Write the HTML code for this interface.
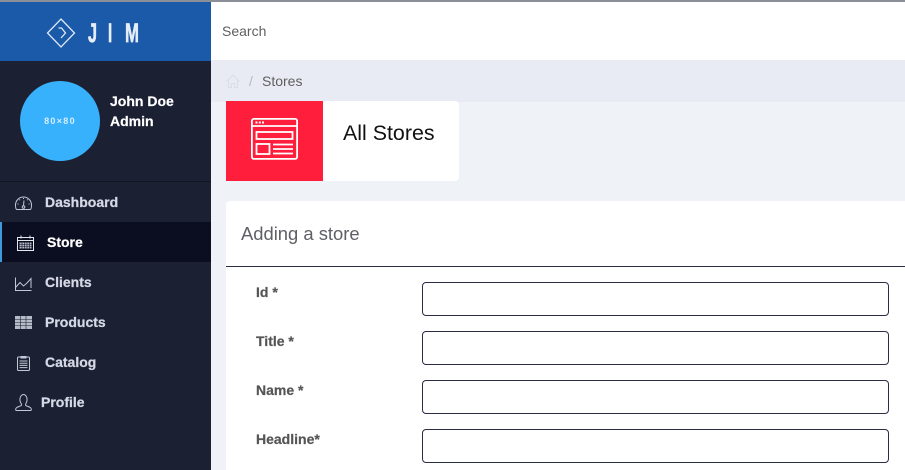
<!DOCTYPE html>
<html><head><meta charset="utf-8"><style>
*{box-sizing:border-box}
html,body{margin:0;padding:0;width:905px;height:470px;overflow:hidden;background:#eff2f6;font-family:"Liberation Sans",sans-serif}
#w{position:absolute;left:0;top:0;width:905px;height:470px;overflow:hidden;background:#eff2f6;filter:blur(.3px)}
.a{position:absolute}
.t{position:absolute;white-space:nowrap;line-height:20px}
.nav{font-weight:700;font-size:14px;color:#d5d9e6;-webkit-text-stroke:.25px currentColor}
.lab{font-weight:700;font-size:14px;color:#555;left:256px;-webkit-text-stroke:.2px currentColor}
.inp{position:absolute;left:422px;width:467px;height:34px;border:1px solid #2b2d45;border-radius:4px;background:#fff}
svg{position:absolute;overflow:visible}
.logo{position:absolute;top:20px;font-size:27px;line-height:27px;font-weight:700;color:#e6eef8;transform-origin:left center;white-space:nowrap;-webkit-text-stroke:.7px #e6eef8}
</style></head><body><div id="w">
<div class="a" style="left:0;top:0;width:905px;height:2px;background:#8a8f98;z-index:5"></div>
<div class="a" style="left:211px;top:1px;width:694px;height:59px;background:#fff"></div>
<div class="t" style="left:222px;top:21px;font-size:14px;color:#5f5f5f">Search</div>
<div class="a" style="left:211px;top:60px;width:694px;height:42px;background:#e8ebf3"></div>
<svg style="left:226px;top:74px" width="14" height="14" viewBox="0 0 14 14" fill="none" stroke="#d9dde6" stroke-width="1"><path d="M.5 7.500 7 1l6.500 6.500M2.500 6v7.500h3V9.500h3v4h3V6"/></svg>
<div class="t" style="left:249px;top:71px;font-size:14px;color:#b5b8bf">/</div>
<div class="t" style="left:262px;top:71px;font-size:14px;color:#5f5f5f">Stores</div>

<div class="a" style="left:0;top:0;width:211px;height:470px;background:#1c2033"></div>
<div class="a" style="left:0;top:1px;width:211px;height:60px;background:#1a5aa8"></div>
<svg style="left:47px;top:18px" width="28" height="30" viewBox="0 0 28 30" fill="none" stroke="#dfe9f6" stroke-width="1.300"><path d="M14 1 27.500 15 14 29 .5 15Z"/><path d="M11.500 10h3l4 5-4.500 5"/></svg>
<div class="logo" style="left:88px;transform:scaleX(.6)">J</div>
<div class="logo" style="left:107.500px;transform:scaleX(.55)">I</div>
<div class="logo" style="left:125px;transform:scaleX(.62)">M</div>

<div class="a" style="left:20px;top:81px;width:80px;height:80px;border-radius:50%;background:#38b1fd"></div>
<div class="t" style="left:20px;top:112px;width:80px;text-align:center;font-size:9px;line-height:18px;letter-spacing:1.300px;color:#d5eeff;font-weight:700">80×80</div>
<div class="t" style="left:110px;top:91px;font-size:14px;font-weight:700;color:#fff;-webkit-text-stroke:.2px #fff">John Doe</div>
<div class="t" style="left:110px;top:111px;font-size:14px;font-weight:700;color:#fff;-webkit-text-stroke:.2px #fff">Admin</div>

<div class="a" style="left:0;top:181px;width:211px;height:1px;background:#12141f"></div>
<div class="a" style="left:0;top:222px;width:211px;height:40px;background:#0a0e20"></div>
<div class="a" style="left:0;top:222px;width:2px;height:40px;background:#3d9bdc"></div>

<div class="t nav" style="left:45px;top:192px">Dashboard</div>
<div class="t nav" style="left:47px;top:232px;color:#fff">Store</div>
<div class="t nav" style="left:45px;top:272px">Clients</div>
<div class="t nav" style="left:45px;top:312px">Products</div>
<div class="t nav" style="left:45px;top:352px">Catalog</div>
<div class="t nav" style="left:41px;top:392px">Profile</div>

<svg style="left:15px;top:196px" width="17" height="14" viewBox="0 0 17 14" fill="none" stroke="#c3c8d6" stroke-width="1"><path d="M2 13.500h13c1 0 1.500-1.800 1.500-4.500A8 8 0 0 0 .5 9c0 2.700.5 4.500 1.500 4.500Z"/><path d="M8.500 9.500 9 4.500M8.500 2v1M4.300 3.500l.7.7M12.700 3.500l-.7.7M2.500 8h1M13.500 8h1"/><circle cx="8.500" cy="11" r="1.300"/></svg>
<svg style="left:17px;top:235px" width="17" height="16" viewBox="0 0 17 16" fill="none" stroke="#e4e7ef" stroke-width="1"><rect x=".5" y="2.500" width="16" height="13"/><path d="M.5 5.500h16M4 .5v3M13 .5v3"/><rect x="2.500" y="7.500" width="12" height="6" fill="#b4b8c6" stroke="none"/><path d="M2.500 9.500h12M2.500 11.500h12M5 7.500v6M7.500 7.500v6M10 7.500v6M12.500 7.500v6" stroke="#0a0e20" stroke-width=".6"/></svg>
<svg style="left:15px;top:277px" width="17" height="14" viewBox="0 0 17 14" fill="none" stroke="#c3c8d6" stroke-width="1"><path d="M.5 .5v13h16"/><path d="M.5 10.500 5 5.500l3.500 3.500 3-2.500 4.500-5V11"/></svg>
<svg style="left:15px;top:316px" width="17" height="13" viewBox="0 0 17 13"><rect width="17" height="13" fill="#b6bbc9"/><path d="M0 3.500h17M0 6.500h17M0 9.500h17M5.500 0v13M11 0v13" stroke="#1c2033" stroke-width=".6"/></svg>
<svg style="left:17px;top:355px" width="13" height="16" viewBox="0 0 13 16" fill="none" stroke="#c3c8d6" stroke-width="1"><rect x=".5" y="2" width="12" height="13.500" rx="1"/><path d="M4 3V1.500h5V3Z"/><path d="M2.500 6h8M2.500 8.200h8M2.500 10.400h8M2.500 12.600h8"/></svg>
<svg style="left:15px;top:394px" width="17" height="17" viewBox="0 0 17 17" fill="none" stroke="#c3c8d6" stroke-width="1"><path d="M1.500 16.500h14c1 0 1-1 .6-2-.7-1.700-3.600-2-5-2.800-.8-.5-.6-1.500 0-2.500C12 7.700 12.200 6 12 4.500 11.700 2 10 .5 8.500.5S5.300 2 5 4.500C4.800 6 5 7.700 6 9.200c.6 1 .7 2 0 2.500-1.500.8-4.300 1.100-5.100 2.800-.4 1-.4 2 .6 2Z"/></svg>

<div class="a" style="left:226px;top:101px;width:233px;height:80px;background:#fff;border-radius:0 4px 4px 0"></div>
<div class="a" style="left:226px;top:101px;width:97px;height:80px;background:#ff1f3c"></div>
<svg style="left:251px;top:118px" width="47" height="42" viewBox="0 0 47 42" fill="none" stroke="#fff" stroke-width="1.800"><rect x=".9" y=".9" width="45.200" height="40" rx="2"/><path d="M1 8h45"/><rect x="5.500" y="14" width="36" height="7"/><rect x="5.500" y="26" width="13" height="10"/><path d="M22 26.500h20M22 31h20M22 35.500h20"/><path d="M4.500 4.500h2M7.800 4.500h2M11 4.500h2" stroke-width="2"/></svg>
<div class="t" style="left:343px;top:120px;font-size:21.400px;line-height:26px;color:#111">All Stores</div>

<div class="a" style="left:226px;top:201px;width:679px;height:269px;background:#fff;border-radius:4px 0 0 0"></div>
<div class="t" style="left:241px;top:222px;font-size:18.400px;line-height:24px;color:#5f6066">Adding a store</div>
<div class="a" style="left:226px;top:266px;width:679px;height:1px;background:#2b2d45"></div>

<div class="t lab" style="top:282px">Id *</div>
<div class="t lab" style="top:331px">Title *</div>
<div class="t lab" style="top:380px">Name *</div>
<div class="t lab" style="top:429px">Headline*</div>
<div class="inp" style="top:282px"></div>
<div class="inp" style="top:331px"></div>
<div class="inp" style="top:380px"></div>
<div class="inp" style="top:429px"></div>
</div></body></html>
